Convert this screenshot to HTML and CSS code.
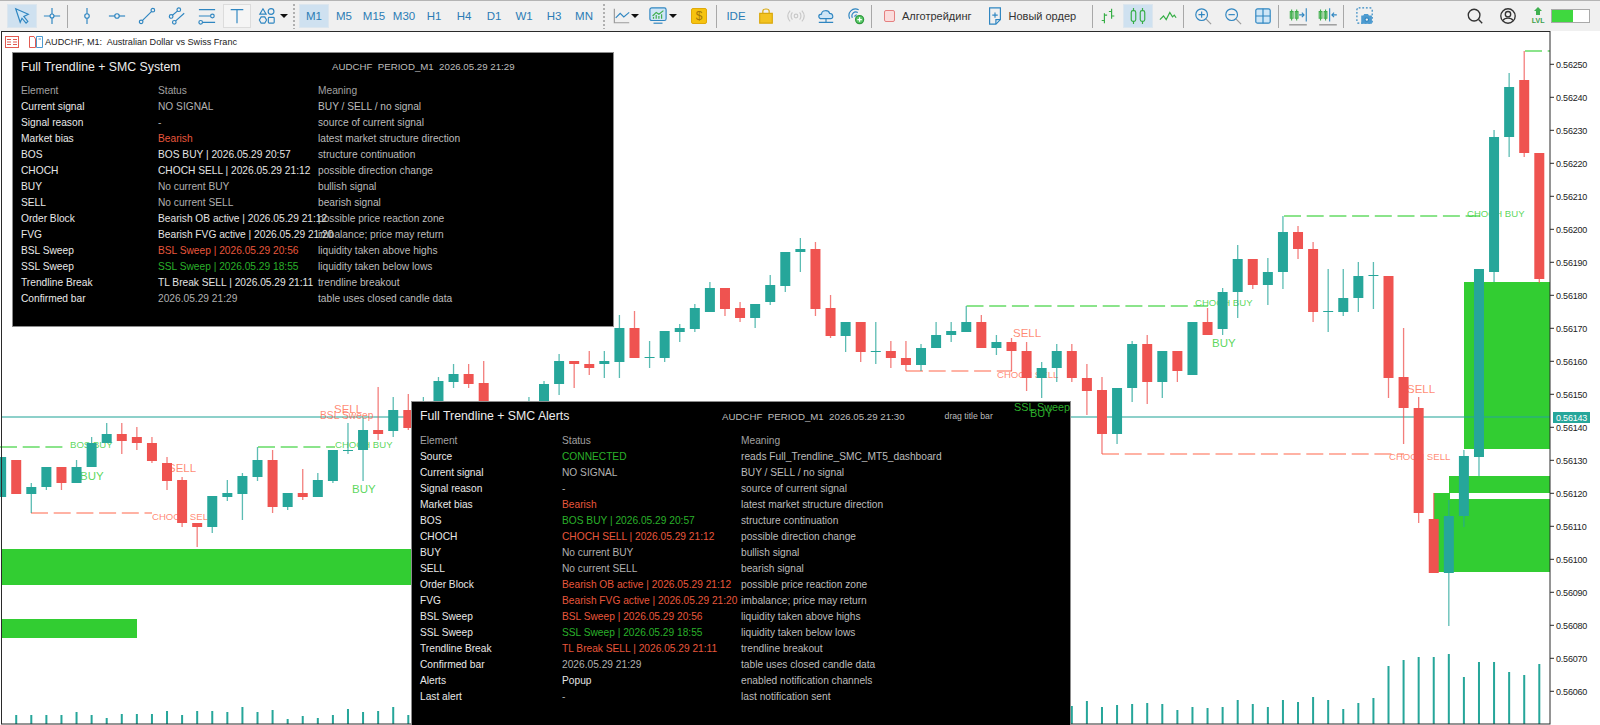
FILE: index.html
```html
<!DOCTYPE html>
<html lang="en">
  <head>
    <meta charset="UTF-8" />
    <title>AUDCHF, M1</title>
    <link rel="stylesheet" href="styles.css">
  </head>
  <body>
    <div class="toolbar">
      <div class="tool selected"><svg class="ic" viewBox="0 0 20 20"><path class="soft" d="M3 2 L17 8 L12 10.5 L16.5 16 L14.5 18 L10 12.5 L8 17 Z"/></svg></div>
      <div class="tool"><svg class="ic" viewBox="0 0 20 20"><path d="M10 1V19M1 10H19"/><circle class="paper" cx="10" cy="10" r="2.2"/></svg></div>
      <div class="sep"></div>
      <div class="tool"><svg class="ic" viewBox="0 0 20 20"><path d="M10 1V19"/><circle class="paper" cx="10" cy="10" r="2.5"/></svg></div>
      <div class="tool"><svg class="ic" viewBox="0 0 20 20"><path d="M1 10H19"/><circle class="paper" cx="10" cy="10" r="2.5"/></svg></div>
      <div class="tool"><svg class="ic" viewBox="0 0 20 20"><path d="M4.5 15.5L15.5 4.5"/><circle class="paper" cx="3.5" cy="16.5" r="2"/><circle class="paper" cx="16.5" cy="3.5" r="2"/></svg></div>
      <div class="tool"><svg class="ic" viewBox="0 0 20 20"><path d="M4 10L11 4M8 16L18 7"/><circle class="paper" cx="3.5" cy="10.5" r="2"/><circle class="paper" cx="12" cy="3" r="2"/><circle class="paper" cx="7" cy="17" r="2"/></svg></div>
      <div class="tool"><svg class="ic" viewBox="0 0 20 20"><path d="M1 3H19M1 10H14M5 17H19"/><circle class="paper" cx="16" cy="10" r="2"/><circle class="paper" cx="3" cy="17" r="2"/></svg></div>
      <div class="tool pressed"><svg class="ic" viewBox="0 0 20 20"><path d="M3 3H17M10 3V18"/></svg></div>
      <div class="tool"><svg class="ic" viewBox="0 0 20 20"><path d="M5.5 2L9 8H2Z"/><circle cx="14.5" cy="5" r="3.2"/><path d="M3.5 11H7.5L9.5 14.5L7.5 18H3.5L1.5 14.5Z"/><rect x="11.5" y="11.5" width="6.5" height="6.5" rx="1"/></svg></div>
      <div class="caret"></div>
      <div class="dots"></div>
      <div class="tool frame selected">M1</div>
      <div class="tool frame">M5</div>
      <div class="tool frame">M15</div>
      <div class="tool frame">M30</div>
      <div class="tool frame">H1</div>
      <div class="tool frame">H4</div>
      <div class="tool frame">D1</div>
      <div class="tool frame">W1</div>
      <div class="tool frame">H3</div>
      <div class="tool frame">MN</div>
      <div class="dots"></div>
      <div class="tool line-type"><svg class="ic" viewBox="0 0 20 20"><path class="axis" d="M1.5 2V17.5H18"/><path d="M3 12L8 7L12 11L18 6"/></svg></div>
      <div class="caret"></div>
      <div class="tool chart-type"><svg class="ic" viewBox="0 0 20 20"><rect class="soft" x="1" y="1" width="18" height="14" rx="2"/><path class="grow" d="M4 10L8 6L11 8L16 4M5 13V11M8 13V9M11 13V10M14 13V8"/><path d="M5 18H15"/></svg></div>
      <div class="caret"></div>
      <div class="coin">$</div>
      <div class="sep"></div>
      <div class="tool frame">IDE</div>
      <div class="tool"><svg class="ic" viewBox="0 0 20 20"><path class="bag" d="M3 7H17V18H3Z"/><path class="bag-handle" d="M6.5 7V4.5C6.500 1.500 13.500 1.500 13.500 4.500V7"/></svg></div>
      <div class="tool"><svg class="ic off" viewBox="0 0 20 20"><circle cx="10" cy="10" r="2"/><path d="M6 6C4 8 4 12 6 14M14 6C16 8 16 12 14 14M3.500 4C0 8 0 12 3.500 16M16.500 4C20 8 20 12 16.500 16"/></svg></div>
      <div class="tool"><svg class="ic" viewBox="0 0 20 20"><path class="soft" d="M5 13C1 13 1 8 5 8C5 3 13 3 14 7C18 7 19 13 15 13Z"/><path d="M10 13V17M2 17H18"/></svg></div>
      <div class="tool"><svg class="ic" viewBox="0 0 20 20"><path d="M3 13C0 6 6 0 13 3M6 12C4 8 8 4 12 6M9 11C8.500 9.500 9.500 8.500 11 9"/><circle class="plus-dot" cx="14" cy="14" r="4.500"/><path class="plus-mark" d="M14 11.500V16.500M11.500 14H16.500"/></svg></div>
      <div class="sep tight"></div>
      <div class="algo"><span class="check"></span>Алготрейдинг</div>
      <div class="algo order"><svg class="ic" viewBox="0 0 20 20"><path class="paper" d="M4 1H16V14L11 19H4Z"/><path d="M10 6V12M7 9H13M11 19V14H16"/></svg>Новый ордер</div>
      <div class="sep tight"></div>
      <div class="tool"><svg class="ic green" viewBox="0 0 20 20"><path d="M6 7V18M3 15H6M6 9H9M14 2V13M11 5H14M14 10H17"/></svg></div>
      <div class="tool selected"><svg class="ic green" viewBox="0 0 20 20"><rect x="2.500" y="4" width="5" height="12" rx="2"/><rect x="12.500" y="4" width="5" height="12" rx="2"/><path d="M5 1V4M5 16V19M15 1V4M15 16V19"/></svg></div>
      <div class="tool"><svg class="ic green" viewBox="0 0 20 20"><path d="M1 14L5 10L8 14L12 6L15 11L17 9L19 12"/></svg></div>
      <div class="sep"></div>
      <div class="tool"><svg class="ic" viewBox="0 0 20 20"><circle cx="8.500" cy="8.500" r="6.500"/><path d="M8.500 5V12M5 8.500H12"/><path class="axis" d="M13.500 13.500L19 19"/></svg></div>
      <div class="tool"><svg class="ic" viewBox="0 0 20 20"><circle cx="8.500" cy="8.500" r="6.500"/><path d="M5 8.500H12"/><path class="axis" d="M13.500 13.500L19 19"/></svg></div>
      <div class="tool"><svg class="ic" viewBox="0 0 20 20"><rect class="soft" x="2" y="2" width="16" height="16" rx="2"/><path d="M10 2V18M2 10H18"/></svg></div>
      <div class="sep"></div>
      <div class="tool"><svg class="ic wide" viewBox="0 0 20 20"><path class="grow thin" d="M3 6H5.500V12H3ZM7.500 6H10V12H7.500ZM4.200 4V14M8.800 4V14"/><path class="thin" d="M11 9H15M13.500 7L15.500 9L13.500 11M17.500 3V15"/><path class="axis" d="M2 18H18"/></svg></div>
      <div class="tool"><svg class="ic wide" viewBox="0 0 20 20"><path class="grow thin" d="M2 6H4.500V12H2ZM6.500 6H9V12H6.500ZM3.200 4V14M7.800 4V14"/><path class="thin" d="M11.500 3V15M18 9H14M15.500 7L13.500 9L15.500 11"/><path class="axis" d="M2 18H18"/></svg></div>
      <div class="sep last"></div>
      <div class="tool"><svg class="ic" viewBox="0 0 20 20"><rect class="dashed" x="1" y="1" width="17" height="17" rx="2"/><path class="solid" d="M6.500 10H8.500L9.500 8.500H13L14 10H17V18H6.500Z"/><circle class="paper" cx="12" cy="14" r="2"/></svg></div>
      <div class="right-tools">
        <div class="tool"><svg class="ic dark" viewBox="0 0 20 20"><circle cx="9" cy="9" r="6.500"/><path d="M14 14L18 18"/></svg></div>
        <div class="tool"><svg class="ic dark" viewBox="0 0 20 20"><circle cx="10" cy="10" r="8"/><circle cx="10" cy="8" r="3"/><path d="M4.500 15C6 11.500 14 11.500 15.500 15"/></svg></div>
        <div class="lvl"><svg class="ic green" viewBox="0 0 12 10"><path class="solid-green" d="M6 0L10 4H8V8H4V4H2Z"/></svg><span>LVL</span></div>
        <div class="meter"><span class="meter-fill"></span></div>
      </div>
    </div>

    <div class="stage">
      <svg class="canvas" viewBox="0 31 1600 694" width="1600" height="694">
        <g class="zones">
          <rect x="2" y="549" width="410" height="36"/>
          <rect x="2" y="619" width="135" height="19"/>
          <rect x="1464" y="282" width="86" height="167"/>
          <rect x="1449" y="476" width="101" height="17"/>
          <rect x="1434" y="493" width="16" height="79"/>
          <rect x="1434" y="499" width="116" height="73"/>
        </g>
        <path class="price-line" d="M2 417H1550"/>
        <g class="levels-up">
          <path d="M0 447H68"/>
          <path d="M258 447H335"/>
          <path d="M966.500 306H1208"/>
          <path d="M1284 216H1480"/>
          <path d="M1525 51H1550"/>
        </g>
        <g class="levels-down">
          <path d="M31 513H152"/>
          <path d="M906 371H1012"/>
          <path d="M1102 454H1404"/>
        </g>
        <g class="marks-up">
          <text x="70" y="448">BOS BUY</text>
          <text x="335" y="448">CHOCH BUY</text>
          <text x="1195" y="306">CHOCH BUY</text>
          <text x="1467" y="217">CHOCH BUY</text>
          <text class="big" x="80" y="480">BUY</text>
          <text class="big" x="352" y="493">BUY</text>
          <text class="big" x="1212" y="347">BUY</text>
        </g>
        <g class="marks-down">
          <text x="152" y="520">CHOCH SELL</text>
          <text x="997" y="378">CHOCH SELL</text>
          <text x="1389" y="460">CHOCH SELL</text>
          <text class="mid" x="320" y="419">BSL Sweep</text>
          <text class="big" x="168" y="472">SELL</text>
          <text class="big" x="334" y="413">SELL</text>
          <text class="big" x="1013" y="337">SELL</text>
          <text class="big" x="1407" y="393">SELL</text>
        </g>
        <g id="candles"></g>
        <g id="volumes"></g>
        <rect class="frame-line" x="1.500" y="31.500" width="1548.500" height="692.500"/>
        <g id="axis"></g>
        <rect class="price-tag" x="1553" y="412" width="37" height="11"/>
        <text class="price-tag-text" x="1556" y="421">0.56143</text>
      </svg>

      <div class="chart-title">
        <svg class="mini" viewBox="0 0 14 12"><rect class="mini-red" x="0.500" y="0.500" width="13" height="11"/><path class="mini-red" d="M2 3.500H6M8 3.500H12M2 6H6M8 6H12M2 8.500H6M8 8.500H12"/></svg>
        <svg class="mini" viewBox="0 0 14 12"><path class="mini-red" d="M0.500 0.500H5L6.500 3V11.500H0.500Z"/><path class="mini-blue" d="M7.500 0.500H13.500V11.500H7.500ZM9.500 3H12"/></svg>
        <span>AUDCHF, M1:&nbsp; Australian Dollar vs Swiss Franc</span>
      </div>

      <div class="panel system">
        <div class="panel-head">
          <span class="panel-name">Full Trendline + SMC System</span>
          <span class="panel-meta">AUDCHF&nbsp; PERIOD_M1&nbsp; 2026.05.29 21:29</span>
        </div>
        <div class="row head"><span>Element</span><span>Status</span><span>Meaning</span></div>
        <div class="row"><span>Current signal</span><span class="grey">NO SIGNAL</span><span>BUY / SELL / no signal</span></div>
        <div class="row"><span>Signal reason</span><span class="grey">-</span><span>source of current signal</span></div>
        <div class="row"><span>Market bias</span><span class="red">Bearish</span><span>latest market structure direction</span></div>
        <div class="row"><span>BOS</span><span class="lit">BOS BUY | 2026.05.29 20:57</span><span>structure continuation</span></div>
        <div class="row"><span>CHOCH</span><span class="lit">CHOCH SELL | 2026.05.29 21:12</span><span>possible direction change</span></div>
        <div class="row"><span>BUY</span><span class="grey">No current BUY</span><span>bullish signal</span></div>
        <div class="row"><span>SELL</span><span class="grey">No current SELL</span><span>bearish signal</span></div>
        <div class="row"><span>Order Block</span><span class="lit">Bearish OB active | 2026.05.29 21:12</span><span>possible price reaction zone</span></div>
        <div class="row"><span>FVG</span><span class="lit">Bearish FVG active | 2026.05.29 21:20</span><span>imbalance; price may return</span></div>
        <div class="row"><span>BSL Sweep</span><span class="red">BSL Sweep | 2026.05.29 20:56</span><span>liquidity taken above highs</span></div>
        <div class="row"><span>SSL Sweep</span><span class="green">SSL Sweep | 2026.05.29 18:55</span><span>liquidity taken below lows</span></div>
        <div class="row"><span>Trendline Break</span><span class="lit">TL Break SELL | 2026.05.29 21:11</span><span>trendline breakout</span></div>
        <div class="row"><span>Confirmed bar</span><span class="grey">2026.05.29 21:29</span><span>table uses closed candle data</span></div>
      </div>

      <div class="panel alerts">
        <div class="panel-head">
          <span class="panel-name">Full Trendline + SMC Alerts</span>
          <span class="panel-meta">AUDCHF&nbsp; PERIOD_M1&nbsp; 2026.05.29 21:30</span>
          <span class="panel-drag">drag title bar</span>
        </div>
        <div class="row head"><span>Element</span><span>Status</span><span>Meaning</span></div>
        <div class="row"><span>Source</span><span class="green">CONNECTED</span><span>reads Full_Trendline_SMC_MT5_dashboard</span></div>
        <div class="row"><span>Current signal</span><span class="grey">NO SIGNAL</span><span>BUY / SELL / no signal</span></div>
        <div class="row"><span>Signal reason</span><span class="grey">-</span><span>source of current signal</span></div>
        <div class="row"><span>Market bias</span><span class="red">Bearish</span><span>latest market structure direction</span></div>
        <div class="row"><span>BOS</span><span class="green">BOS BUY | 2026.05.29 20:57</span><span>structure continuation</span></div>
        <div class="row"><span>CHOCH</span><span class="red">CHOCH SELL | 2026.05.29 21:12</span><span>possible direction change</span></div>
        <div class="row"><span>BUY</span><span class="grey">No current BUY</span><span>bullish signal</span></div>
        <div class="row"><span>SELL</span><span class="grey">No current SELL</span><span>bearish signal</span></div>
        <div class="row"><span>Order Block</span><span class="red">Bearish OB active | 2026.05.29 21:12</span><span>possible price reaction zone</span></div>
        <div class="row"><span>FVG</span><span class="red">Bearish FVG active | 2026.05.29 21:20</span><span>imbalance; price may return</span></div>
        <div class="row"><span>BSL Sweep</span><span class="red">BSL Sweep | 2026.05.29 20:56</span><span>liquidity taken above highs</span></div>
        <div class="row"><span>SSL Sweep</span><span class="green">SSL Sweep | 2026.05.29 18:55</span><span>liquidity taken below lows</span></div>
        <div class="row"><span>Trendline Break</span><span class="red">TL Break SELL | 2026.05.29 21:11</span><span>trendline breakout</span></div>
        <div class="row"><span>Confirmed bar</span><span class="grey">2026.05.29 21:29</span><span>table uses closed candle data</span></div>
        <div class="row"><span>Alerts</span><span class="lit">Popup</span><span>enabled notification channels</span></div>
        <div class="row"><span>Last alert</span><span class="grey">-</span><span>last notification sent</span></div>
      </div>

      <span class="panel-mark sweep">SSL Sweep</span>
      <span class="panel-mark buy">BUY</span>
    </div>
    <script src="script.js"></script>
  </body>
</html>
```

FILE: styles.css
```css
* {
  margin: 0;
  padding: 0;
  box-sizing: border-box;
}
body {
  width: 1600px;
  height: 725px;
  overflow: hidden;
  background: #fff;
  display: flex;
  flex-direction: column;
  font-family: "Liberation Sans", Arial, sans-serif;
}

/* toolbar */
.toolbar {
  height: 31px;
  flex: none;
  display: flex;
  align-items: center;
  padding-left: 7px;
  background: #f0f0f0;
  border-top: 1px solid #b4b4b4;
}
.tool {
  width: 30px;
  height: 24px;
  flex: none;
  display: flex;
  align-items: center;
  justify-content: center;
}
.tool.line-type {
  width: 24px;
  padding-left: 4px;
  justify-content: flex-start;
}
.tool.chart-type {
  width: 24px;
  margin-left: 7px;
  padding-left: 2px;
  justify-content: flex-start;
}
.tool.selected {
  background: #cfe1f0;
  border: 1px solid #dce6ee;
}
.tool.pressed {
  background: #f5f5f5;
  border: 1px solid #dcdcdc;
  width: 28px;
  margin: 0 1px;
}
.frame {
  font-size: 11.500px;
  color: #2b7cb5;
}
.sep {
  width: 1px;
  height: 23px;
  background: #a8a8a8;
  margin-right: 4px;
  flex: none;
}
.sep.tight {
  margin-right: 0;
}
.sep.last {
  margin-right: 6px;
}
.dots {
  width: 2px;
  height: 25px;
  margin: 0 4px;
  flex: none;
  background: repeating-linear-gradient(#b0b0b0 0 2px, transparent 2px 4px);
}
.caret {
  width: 0;
  height: 0;
  flex: none;
  margin-left: -2px;
  margin-right: 1px;
  border-left: 4px solid transparent;
  border-right: 4px solid transparent;
  border-top: 4px solid #111;
}
.coin {
  width: 16px;
  height: 16px;
  margin: 0 9px 0 13px;
  flex: none;
  background: #f6c30f;
  border: 1px solid #e0a90a;
  border-radius: 2px;
  color: #a5770a;
  font-size: 12px;
  line-height: 14px;
  text-align: center;
}
.algo {
  display: flex;
  align-items: center;
  flex: none;
  font-size: 11px;
  color: #333;
  margin-left: 12px;
}
.check {
  width: 11px;
  height: 12px;
  margin-right: 7px;
  background: #fbdcdc;
  border: 1px solid #e58080;
  border-radius: 2px;
}
.order {
  margin-left: 15px;
  margin-right: 16px;
}
.order .ic {
  margin-right: 4px;
}
.right-tools {
  display: flex;
  align-items: center;
  margin-left: 78px;
}
.right-tools .tool {
  width: 33px;
}
.lvl {
  width: 20px;
  margin-left: 4px;
  margin-right: 3px;
  display: flex;
  flex-direction: column;
  align-items: center;
  color: #3ca04a;
  font-size: 7px;
  font-weight: 700;
  line-height: 8px;
}
.lvl .ic {
  width: 12px;
  height: 10px;
}
.meter {
  width: 39px;
  height: 14px;
  border: 1px solid #a9a9a9;
  background: #fff;
}
.meter-fill {
  display: block;
  width: 21px;
  height: 100%;
  background: #3fd83f;
}

/* icons */
.ic {
  width: 18px;
  height: 18px;
  fill: none;
  stroke: #2f86c1;
  stroke-width: 1.300;
}
.ic .soft {
  fill: #cfe6f6;
}
.ic .paper {
  fill: #f0f0f0;
}
.ic .axis {
  stroke: #9a9a9a;
}
.ic .grow {
  stroke: #3fae4b;
}
.ic .thin {
  stroke-width: 1;
}
.ic .bag {
  fill: #f3c320;
  stroke: #d9a80c;
}
.ic .bag-handle {
  stroke: #d9a80c;
}
.ic.off {
  stroke: #c8c8c8;
}
.ic .plus-dot {
  fill: #5cc96a;
  stroke: #2f9a3e;
}
.ic .plus-mark {
  stroke: #fff;
}
.ic.green {
  stroke: #35ae45;
}
.ic.dark {
  stroke: #333;
  stroke-width: 1.500;
}
.ic.wide {
  width: 22px;
  height: 22px;
}
.ic .dashed {
  stroke-dasharray: 2 2;
}
.ic .solid {
  fill: #4d9bd0;
  stroke: #4d9bd0;
}
.ic .solid-green {
  fill: #3fb04f;
  stroke: none;
}

/* chart */
.stage {
  flex: 1;
  position: relative;
}
.canvas {
  position: absolute;
  left: 0;
  top: 0;
}
.zones rect {
  fill: #32cd32;
}
.price-line {
  stroke: #26a69a;
  stroke-opacity: 0.7;
  stroke-width: 1.300;
}
.levels-up path,
.levels-down path {
  fill: none;
  stroke-width: 1.300;
  stroke-dasharray: 17 5.700;
}
.levels-up path {
  stroke: #32cd32;
  stroke-opacity: 0.75;
}
.levels-down path {
  stroke: #ff6347;
  stroke-opacity: 0.65;
}
.marks-up text,
.marks-down text {
  font-size: 9.600px;
}
.marks-up text {
  fill: #32cd32;
  fill-opacity: 0.8;
}
.marks-down text {
  fill: #ff6347;
  fill-opacity: 0.75;
}
.marks-down .mid {
  font-size: 10.300px;
}
.marks-up .big,
.marks-down .big {
  font-size: 11.500px;
}
.body-up {
  fill: #26a69a;
}
.body-down {
  fill: #ef5350;
}
.wick-up,
.wick-down {
  stroke-width: 1.300;
  stroke-opacity: 0.75;
}
.wick-up {
  stroke: #26a69a;
}
.wick-down {
  stroke: #ef5350;
}
.volume {
  fill: #26a69a;
}
.frame-line {
  fill: none;
  stroke: #2a2a2a;
}
.tick {
  stroke: #2a2a2a;
}
.price {
  font-size: 9px;
  letter-spacing: -0.200px;
  fill: #222;
}
.price-tag {
  fill: #26a69a;
}
.price-tag-text {
  font-size: 9px;
  letter-spacing: -0.200px;
  fill: #fff;
}
.chart-title {
  position: relative;
  height: 21px;
  padding-left: 5px;
  display: flex;
  align-items: center;
  gap: 10px;
  font-size: 9.100px;
  color: #222;
}
.chart-title span {
  margin-left: -8px;
}
.mini {
  width: 14px;
  height: 12px;
  fill: none;
}
.mini-red {
  stroke: #e25b52;
}
.mini-blue {
  stroke: #4d9bd0;
}

/* info panels */
.panel {
  position: absolute;
  background: #000;
  border: 1px solid #8c8c8c;
  color: #bcbcbc;
  font-size: 10.200px;
  white-space: nowrap;
}
.panel.system {
  left: 12px;
  top: 21px;
  width: 602px;
  height: 275px;
  padding-left: 8px;
}
.panel.alerts {
  left: 411px;
  top: 370px;
  width: 660px;
  height: 330px;
  padding-left: 8px;
  border-bottom: none;
}
.panel-head {
  height: 30px;
  padding-bottom: 3px;
  display: flex;
  align-items: center;
}
.alerts .panel-head {
  height: 31px;
}
.panel-name {
  width: 311px;
  font-size: 12.300px;
  color: #ececec;
}
.alerts .panel-name {
  width: 302px;
}
.panel-meta {
  font-size: 9.700px;
  color: #bcbcbc;
}
.panel-drag {
  margin-left: 40px;
  font-size: 8.700px;
}
.row {
  height: 16px;
  line-height: 16px;
  display: grid;
  grid-template-columns: 137px 160px 1fr;
}
.alerts .row {
  grid-template-columns: 142px 179px 1fr;
}
.row span:first-child {
  color: #e8e8e8;
}
.row.head span,
.row.head span:first-child {
  color: #a0a0a0;
}
.grey {
  color: #b0b0b0;
}
.lit {
  color: #e4e4e4;
}
.red {
  color: #e8573c;
}
.green {
  color: #2ab02a;
}
.panel-mark {
  position: absolute;
  color: #2cae2c;
  white-space: nowrap;
}
.panel-mark.sweep {
  left: 1014px;
  top: 370px;
  font-size: 10.800px;
}
.panel-mark.buy {
  left: 1030px;
  top: 376px;
  font-size: 11px;
}
```

FILE: script.js
```js
// index, up?, wick top, body top, body bottom, wick bottom (page pixels)
const candles = [
  [-2, 1, 457, 457, 497, 497], [-1, 0, 460, 460, 494, 494], [0, 1, 483, 487, 494, 513],
  [1, 1, 467, 467, 487, 490], [2, 0, 467, 467, 483, 490], [3, 1, 460, 467, 483, 483],
  [4, 1, 437, 443, 467, 467], [5, 1, 423, 434, 443, 443], [6, 0, 423, 434, 441, 454],
  [7, 0, 427, 437, 443, 450], [8, 0, 437, 443, 461, 463], [9, 0, 457, 463, 481, 490],
  [10, 0, 477, 480, 523, 527], [11, 0, 523, 523, 527, 547], [12, 1, 496, 496, 527, 533],
  [13, 1, 480, 493, 497, 501], [14, 1, 473, 476, 494, 520], [15, 1, 447, 460, 477, 481],
  [16, 0, 450, 460, 507, 513], [17, 1, 493, 493, 507, 510], [18, 0, 469, 493, 497, 500],
  [19, 1, 473, 480, 497, 497], [20, 1, 450, 450, 481, 483], [21, 1, 423, 450, 451, 454],
  [22, 1, 418, 430, 450, 481], [23, 0, 387, 430, 434, 440], [24, 1, 397, 410, 431, 437],
  [25, 0, 394, 410, 428, 430], [26, 1, 397, 410, 430, 440], [27, 1, 377, 381, 420, 430],
  [28, 1, 364, 374, 382, 388], [29, 0, 364, 374, 384, 388], [30, 0, 361, 383, 420, 430],
  [33, 1, 397, 410, 430, 440], [34, 1, 381, 384, 420, 430], [35, 1, 354, 361, 384, 395],
  [36, 0, 361, 361, 364, 388], [37, 0, 351, 364, 368, 375], [38, 1, 351, 361, 364, 378],
  [39, 1, 315, 328, 362, 378], [40, 0, 311, 328, 358, 358], [41, 1, 341, 357, 358, 368],
  [42, 1, 331, 331, 358, 362], [43, 1, 324, 328, 332, 342], [44, 1, 304, 308, 329, 332],
  [45, 1, 282, 288, 312, 312], [46, 0, 288, 288, 309, 316], [47, 0, 302, 308, 318, 322],
  [48, 1, 304, 304, 318, 328], [49, 1, 275, 285, 302, 305], [50, 1, 252, 252, 286, 292],
  [51, 1, 238, 249, 252, 272], [52, 0, 242, 249, 309, 316], [53, 0, 295, 308, 336, 338],
  [54, 1, 322, 322, 336, 352], [55, 0, 322, 322, 352, 362], [56, 1, 322, 351, 352, 364],
  [57, 0, 341, 351, 358, 368], [58, 0, 341, 358, 365, 371], [59, 1, 344, 348, 365, 371],
  [60, 1, 322, 335, 348, 348], [61, 1, 322, 331, 335, 342], [62, 1, 306, 322, 332, 332],
  [63, 0, 315, 322, 348, 348], [64, 1, 335, 342, 348, 355], [65, 0, 338, 342, 351, 371],
  [66, 0, 342, 351, 378, 391], [67, 1, 362, 368, 378, 398], [68, 1, 344, 351, 368, 382],
  [69, 0, 344, 351, 378, 382], [70, 0, 364, 378, 391, 415], [71, 0, 377, 390, 434, 454],
  [72, 1, 388, 388, 434, 444], [73, 1, 341, 344, 388, 402], [74, 0, 335, 344, 382, 404],
  [75, 1, 351, 351, 382, 398], [76, 0, 351, 351, 371, 382], [77, 1, 322, 322, 375, 375],
  [78, 0, 308, 322, 335, 335], [79, 1, 288, 292, 329, 335], [80, 1, 245, 259, 292, 318],
  [81, 0, 259, 259, 285, 289], [82, 1, 258, 272, 285, 305], [83, 1, 216, 232, 272, 289],
  [84, 0, 226, 232, 249, 259], [85, 0, 242, 249, 312, 322], [86, 1, 269, 311, 312, 332],
  [87, 1, 269, 298, 312, 316], [88, 1, 262, 276, 298, 312], [89, 1, 262, 275, 276, 309],
  [90, 0, 276, 276, 378, 398], [91, 0, 328, 377, 408, 444], [92, 0, 397, 408, 513, 523],
  [93, 0, 493, 519, 573, 573], [94, 1, 500, 516, 573, 626], [95, 1, 450, 456, 516, 527],
  [96, 1, 269, 269, 457, 476], [97, 1, 130, 137, 272, 282], [98, 1, 73, 87, 137, 157],
  [99, 0, 51, 80, 153, 157], [100, 0, 153, 153, 279, 283],
];

// index, height of the volume bar
const volumes = [
  [-1, 9], [0, 9], [1, 9], [2, 9], [3, 12], [4, 9], [5, 6], [6, 10], [7, 10], [8, 10], [9, 13],
  [10, 9], [11, 13], [12, 13], [13, 12], [14, 17], [15, 12], [16, 14], [17, 5], [18, 8], [19, 6],
  [20, 9], [21, 15], [22, 12], [23, 13], [24, 17], [25, 9], [69, 18], [70, 23], [71, 17], [72, 19],
  [73, 20], [74, 21], [75, 20], [76, 14], [77, 17], [78, 16], [79, 17], [80, 24], [81, 20], [82, 17],
  [83, 24], [84, 22], [85, 27], [86, 24], [87, 15], [88, 21], [89, 26], [90, 58], [91, 64], [92, 67],
  [93, 67], [94, 70], [95, 47], [96, 62], [97, 62], [98, 52], [99, 49], [100, 60],
];

const SVG_NS = "http://www.w3.org/2000/svg";
const qs_ = (sl) => document.querySelector(sl);
const barX = (i) => 31.3 + 15.08 * i;

function add(parent, tag, attrs, text) {
  const el = document.createElementNS(SVG_NS, tag);
  Object.keys(attrs).forEach((key) => el.setAttribute(key, attrs[key]));
  if (text) el.textContent = text;
  parent.appendChild(el);
}

candles.forEach(([i, up, high, top, bottom, low]) => {
  const x = barX(i);
  const side = up ? "up" : "down";
  add(qs_("#candles"), "line", { class: "wick-" + side, x1: x, x2: x, y1: high, y2: low });
  add(qs_("#candles"), "rect", { class: "body-" + side, x: x - 5, y: top, width: 10, height: bottom - top });
});

volumes.forEach(([i, h]) => {
  add(qs_("#volumes"), "rect", { class: "volume", x: barX(i) - 1, y: 724 - h, width: 2, height: h });
});

for (let k = 0; k < 20; k++) {
  const y = 64.3 + 33 * k;
  add(qs_("#axis"), "line", { class: "tick", x1: 1550, x2: 1554, y1: y, y2: y });
  add(qs_("#axis"), "text", { class: "price", x: 1556, y: y + 3.5 }, (0.5625 - k * 0.0001).toFixed(5));
}
```
